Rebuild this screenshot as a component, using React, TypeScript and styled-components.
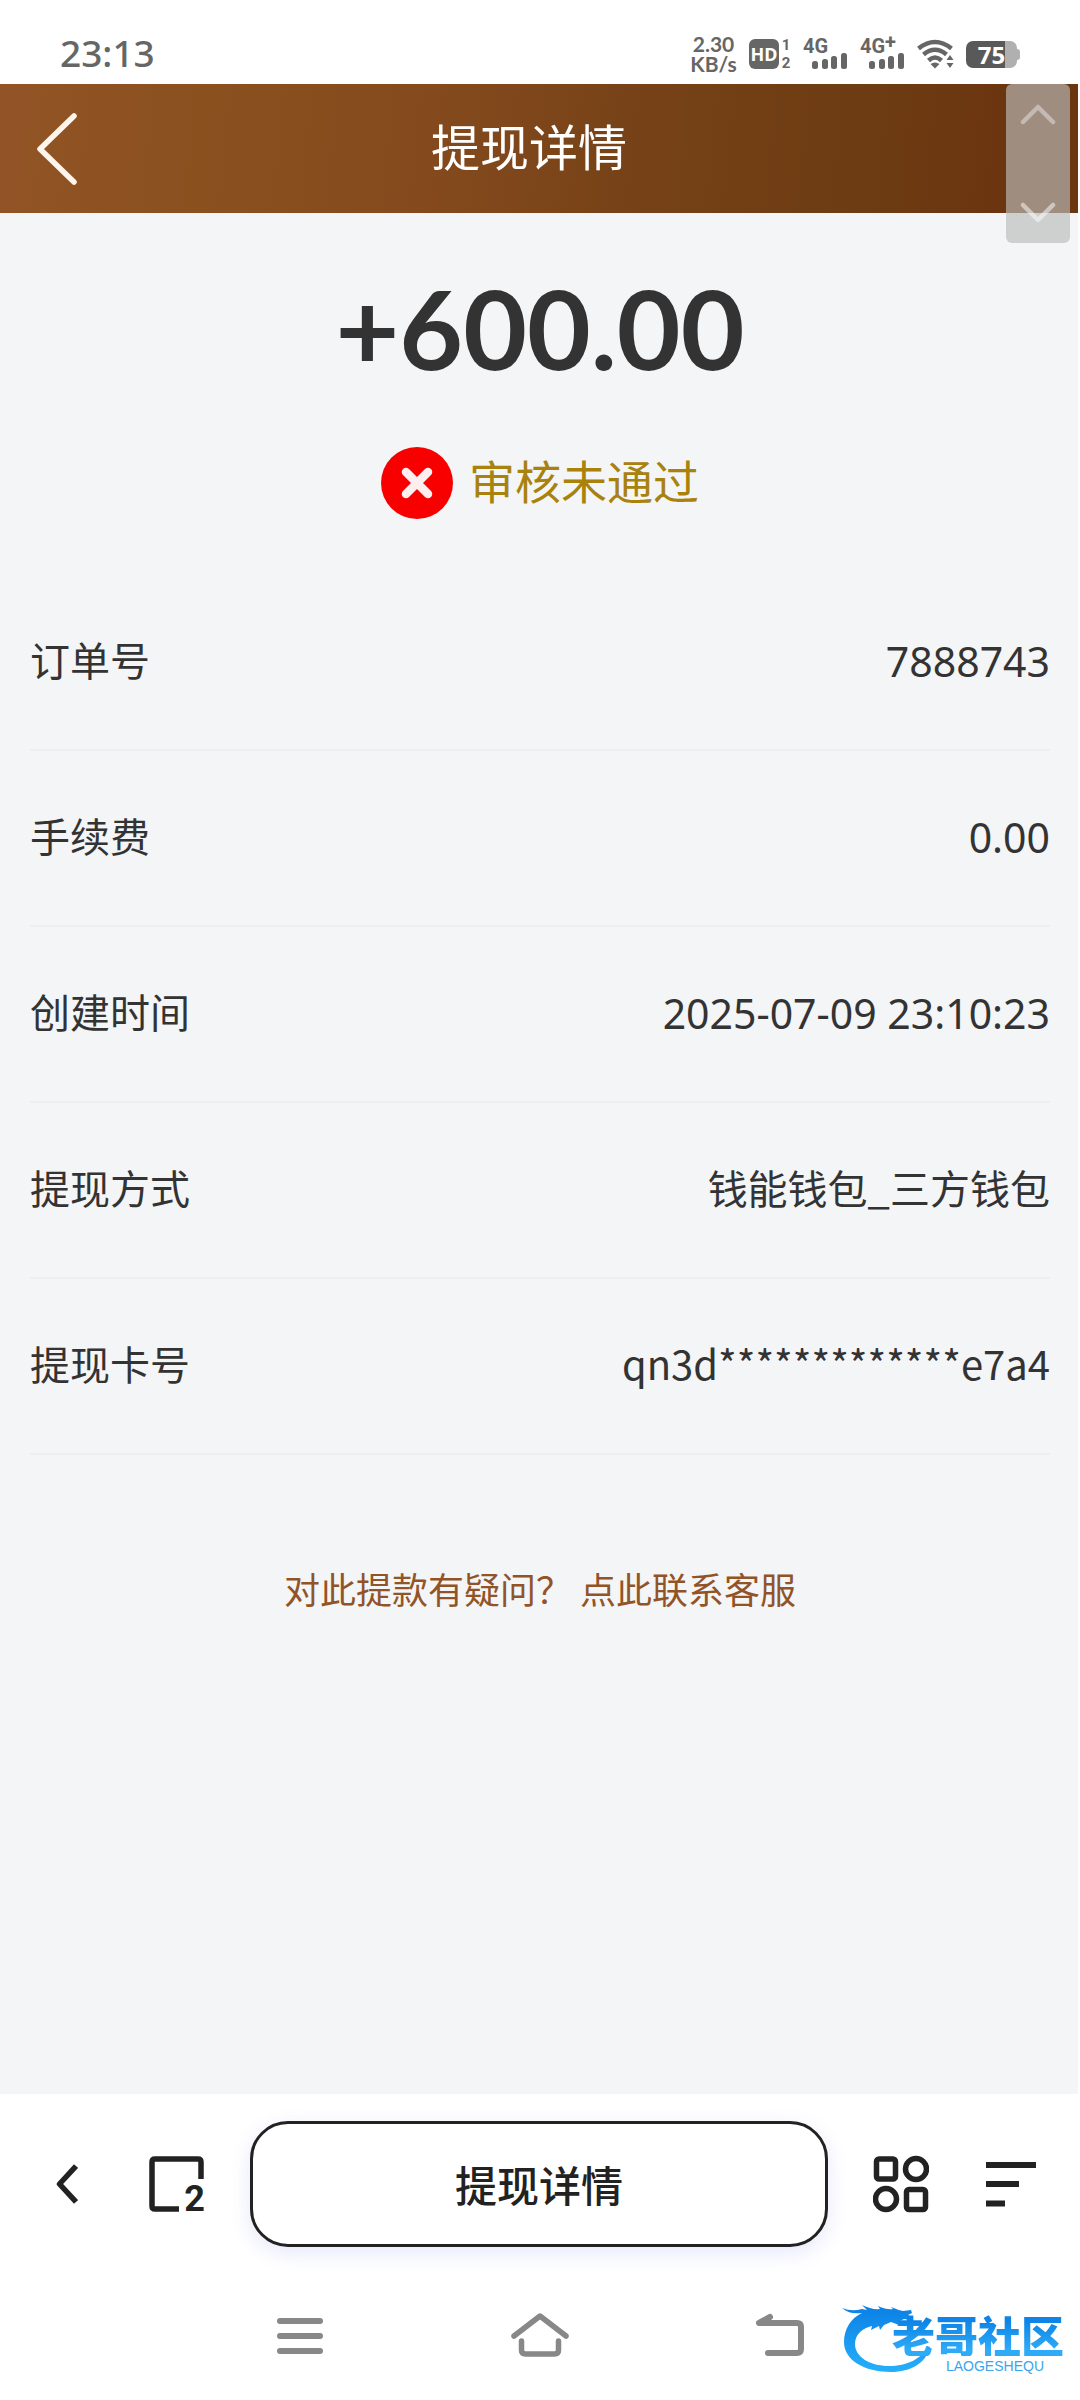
import React from 'react';
import styled, { createGlobalStyle } from 'styled-components';

const cjk = '"Noto Sans CJK SC", sans-serif';
const latin = '"Noto Sans", "Noto Sans CJK SC", sans-serif';

const GlobalStyle = createGlobalStyle`
  *, *::before, *::after { box-sizing: border-box; }
  body { margin: 0; background: #fff; font-family: ${cjk}; color: #333; }
  h1, p, dl, dd { margin: 0; }
  button { padding: 0; border: 0; background: none; color: inherit; font: inherit; cursor: pointer; }
  svg { display: block; }
`;

const Screen = styled.div`
  position: relative;
  display: flex;
  flex-direction: column;
  min-height: 100vh;
`;

const StatusBar = styled.div`
  display: flex;
  align-items: center;
  justify-content: space-between;
  height: 84px;
  padding: 24px 60px 0;
  color: #666;
  font-family: ${latin};
`;

const Clock = styled.time`
  padding-bottom: 2px;
  font-size: 37px;
  line-height: 40px;
  font-weight: 500;
`;

const StatusIcons = styled.div`
  display: flex;
  align-items: center;
  gap: 12px;
`;

const Speed = styled.div`
  display: flex;
  flex-direction: column;
  width: 47px;
  font-family: Lato, sans-serif;
  font-size: 21px;
  line-height: 20px;
  font-weight: 700;
  text-align: center;
`;

const Volte = styled.div`
  display: flex;
  align-items: center;
  gap: 2px;
`;

const HdBadge = styled.span`
  width: 30px;
  height: 30px;
  border-radius: 6px;
  background: #666;
  color: #fff;
  font-size: 18px;
  line-height: 30px;
  font-weight: 700;
  text-align: center;
`;

const SimNumbers = styled.span`
  display: flex;
  flex-direction: column;
  align-items: center;
  width: 10px;
  font-family: Roboto, sans-serif;
  font-size: 15px;
  line-height: 18px;
  font-weight: 700;
`;

const Signal = styled.div`
  width: 45px;
  height: 30px;
  font-family: Roboto, sans-serif;
  font-size: 20px;
  line-height: 14px;
  font-weight: 700;
  white-space: nowrap;

  svg { margin-left: 9px; }
`;

const Plus = styled.span`
  line-height: 0;
  vertical-align: 4px;
`;

const Battery = styled.div`
  display: flex;
  align-items: center;

  &::after {
    content: '';
    width: 3px;
    height: 11px;
    border-radius: 0 3px 3px 0;
    background: #b0b0b0;
  }
`;

const BatteryLevel = styled.span`
  width: 51px;
  height: 27px;
  border-radius: 7px;
  background: linear-gradient(90deg, #595959 76%, #b0b0b0 76%);
  color: #fff;
  font-size: 24px;
  line-height: 27px;
  font-weight: 700;
  text-align: center;
`;

const WebView = styled.div`
  flex: 1;
  display: flex;
  flex-direction: column;
  border-right: 2px solid #fff;
  background: #f3f5f7;
`;

const Header = styled.header`
  display: flex;
  align-items: center;
  height: 129px;
  padding-right: 136px;
  background: linear-gradient(96deg, #925426 0%, #8a501e 20%, #844a1d 40%, #764117 60%, #6d3c12 80%, #6b3510 92%);
  color: #fff;
`;

const BackButton = styled.button`
  display: flex;
  align-items: center;
  width: 116px;
  height: 100%;
  padding-left: 35px;
`;

const Title = styled.h1`
  flex: 1;
  padding-bottom: 8px;
  font-size: 49px;
  line-height: 64px;
  font-weight: 400;
  text-align: center;
`;

const Detail = styled.main`
  flex: 1;
  padding: 48px 28px 0 30px;
`;

const Amount = styled.p`
  font-family: Lato, sans-serif;
  font-size: 110px;
  line-height: 132px;
  font-weight: 700;
  text-align: center;
`;

const ReviewState = styled.p`
  display: flex;
  align-items: center;
  justify-content: center;
  gap: 16px;
  margin: 54px 0 56px;
  color: #a8820c;
  font-size: 46px;
  line-height: 64px;
`;

const ReviewText = styled.span`
  padding-bottom: 8px;
`;

const Rows = styled.dl`
  color: #333;
`;

const Row = styled.div`
  display: flex;
  align-items: center;
  justify-content: space-between;
  height: 176px;
  border-bottom: 2px solid #eeeff0;
  font-size: 40px;
  line-height: 56px;
`;

const Label = styled.dt`
  padding-bottom: 6px;
`;

const Value = styled.dd<{ $numeric?: boolean }>`
  padding-bottom: ${(p) => (p.$numeric ? 2 : 6)}px;
  font-family: ${(p) => (p.$numeric ? latin : cjk)};
  font-size: ${(p) => (p.$numeric ? 41 : 40)}px;
`;

const Help = styled.p`
  padding: 106px 0 60px;
  font-size: 36px;
  line-height: 54px;
  text-align: center;
`;

const HelpLink = styled.a`
  color: #925426;
  text-decoration: none;
`;

const ScrollPad = styled.div`
  position: absolute;
  top: 84px;
  right: 10px;
  display: flex;
  flex-direction: column;
  justify-content: space-between;
  width: 64px;
  height: 159px;
  border-radius: 6px;
  background: rgba(187, 187, 187, 0.66);
`;

const ScrollButton = styled.button`
  display: grid;
  place-items: center;
  height: 60px;
`;

const Toolbar = styled.nav`
  display: flex;
  align-items: center;
  height: 180px;
  padding: 0 32px 0 27px;
  color: #222;
`;

const ToolButton = styled.button<{ $width: number }>`
  display: grid;
  place-items: center;
  flex: 0 0 ${(p) => p.$width}px;
  height: 126px;
`;

const TabsIcon = styled.span`
  position: relative;
  width: 56px;
  height: 58px;
`;

const TabCount = styled.span`
  position: absolute;
  right: 0;
  bottom: 0;
  font-family: Roboto, sans-serif;
  font-size: 36px;
  line-height: 44px;
  font-weight: 700;
  margin-bottom: -8px;
`;

const AddressButton = styled.button`
  flex: 1;
  height: 126px;
  margin-left: 3px;
  border: 3px solid #222;
  border-radius: 38px;
  background: #fff;
  box-shadow: 0 6px 20px rgba(80, 90, 220, 0.14);
  font-size: 42px;
  line-height: 60px;
  font-weight: 500;
`;

const SystemNav = styled.nav`
  display: flex;
  justify-content: center;
  height: 126px;
  padding-bottom: 2px;
  color: #888;
`;

const NavButton = styled.button`
  display: grid;
  place-items: center;
  flex: 0 1 240px;
`;

const Watermark = styled.div`
  position: absolute;
  right: 16px;
  bottom: 22px;
  width: 222px;
  height: 78px;

  svg { position: absolute; inset: 0; }
`;

const BrandText = styled.div`
  position: relative;
  display: flex;
  flex-direction: column;
  align-items: flex-end;
  padding-top: 12px;
`;

const BrandName = styled.span`
  background: linear-gradient(#0d84e6 20%, #2eaaf7 85%);
  background-clip: text;
  color: transparent;
  font-size: 43px;
  line-height: 44px;
  font-weight: 900;
`;

const BrandLatin = styled.span`
  padding-right: 20px;
  color: #3aa5ee;
  font-family: "Liberation Sans", sans-serif;
  font-size: 14px;
  line-height: 20px;
`;

const SignalBars = () => (
  <svg width="36" height="16" viewBox="0 0 36 16" fill="currentColor" aria-hidden="true">
    <rect x="0" y="8" width="6" height="8" rx="2.5" />
    <rect x="10" y="6" width="6" height="10" rx="2.5" />
    <rect x="19" y="3" width="6" height="13" rx="2.5" />
    <rect x="29" y="0" width="6" height="16" rx="2.5" />
  </svg>
);

const WifiIcon = () => (
  <svg width="37" height="30" viewBox="0 0 37 30" fill="none" stroke="currentColor" strokeWidth="4.5" aria-hidden="true">
    <path d="M1.5 9.5Q18 -3.5 34.5 9.5" />
    <path d="M6.5 15.5Q18 6 29.5 15.5" />
    <path d="M11.5 21.5Q18 15.5 24.5 21.5" />
    <path d="M13.5 25Q18 22 22.5 25L18 29.5Z" fill="currentColor" stroke="none" />
    <path d="M33 16l3.5 5h-7zM33 29l-3.5-5h7z" fill="currentColor" stroke="none" />
  </svg>
);

const FailIcon = () => (
  <svg width="72" height="72" viewBox="0 0 72 72" aria-hidden="true">
    <circle cx="36" cy="36" r="36" fill="#f80000" />
    <path d="M25 25L47 47M47 25L25 47" stroke="#fdeef0" strokeWidth="8.5" strokeLinecap="round" />
  </svg>
);

const DragonMark = () => (
  <svg width="222" height="78" viewBox="0 0 222 78" aria-hidden="true">
    <defs>
      <linearGradient id="dragon" x1="0" y1="0" x2="0" y2="1">
        <stop offset="0" stopColor="#0b7fe4" />
        <stop offset="1" stopColor="#25b0fb" />
      </linearGradient>
    </defs>
    <path
      fill="url(#dragon)"
      d="M0 8q10 4 20 1l5 1-5-5q10 5 18 4l-2-3q9 4 15 3l-2-2q7 3 12 4l8-1 1 3-4 2 5 3-2 2-7-1-4 2 6 1 5-1-3 5-9-1-8-3-7 3-4 5-1-4-8 4 1-4C21 28 13 34 13 44c0 13 15 22 34 22 18 0 33-7 38-20l3 1C84 63 69 72 49 72 22 72 2 60 2 42 2 29 9 18 20 13 12 14 6 13 0 8z"
    />
  </svg>
);

const rows = [
  { label: '订单号', value: '7888743', numeric: true },
  { label: '手续费', value: '0.00', numeric: true },
  { label: '创建时间', value: '2025-07-09 23:10:23', numeric: true },
  { label: '提现方式', value: '钱能钱包_三方钱包' },
  { label: '提现卡号', value: 'qn3d*************e7a4' },
];

export default function App() {
  return (
    <>
      <GlobalStyle />
      <Screen lang="zh-CN">
        <StatusBar>
          <Clock>23:13</Clock>
          <StatusIcons>
            <Speed>
              <span>2.30</span>
              <span>KB/s</span>
            </Speed>
            <Volte>
              <HdBadge>HD</HdBadge>
              <SimNumbers>
                <span>1</span>
                <span>2</span>
              </SimNumbers>
            </Volte>
            <Signal>
              4G
              <SignalBars />
            </Signal>
            <Signal>
              4G<Plus>+</Plus>
              <SignalBars />
            </Signal>
            <WifiIcon />
            <Battery>
              <BatteryLevel>75</BatteryLevel>
            </Battery>
          </StatusIcons>
        </StatusBar>

        <WebView>
          <Header>
            <BackButton aria-label="返回">
              <svg width="44" height="76" viewBox="0 0 44 76" fill="none" stroke="#fff5ea" strokeWidth="5.5" strokeLinecap="round" strokeLinejoin="round">
                <path d="M39 5L5 38L39 71" />
              </svg>
            </BackButton>
            <Title>提现详情</Title>
          </Header>
          <Detail>
            <Amount>+600.00</Amount>
            <ReviewState>
              <FailIcon />
              <ReviewText>审核未通过</ReviewText>
            </ReviewState>
            <Rows>
              {rows.map((row) => (
                <Row key={row.label}>
                  <Label>{row.label}</Label>
                  <Value $numeric={row.numeric}>{row.value}</Value>
                </Row>
              ))}
            </Rows>
            <Help>
              <HelpLink href="#service">对此提款有疑问？ 点此联系客服</HelpLink>
            </Help>
          </Detail>
        </WebView>

        <ScrollPad>
          <ScrollButton aria-label="向上滚动">
            <svg width="36" height="22" viewBox="0 0 36 22" fill="none" stroke="#fff" strokeOpacity="0.4" strokeWidth="4.5" strokeLinecap="round" strokeLinejoin="round">
              <path d="M3 19L18 4L33 19" />
            </svg>
          </ScrollButton>
          <ScrollButton aria-label="向下滚动">
            <svg width="36" height="22" viewBox="0 0 36 22" fill="none" stroke="#fff" strokeOpacity="0.5" strokeWidth="4.5" strokeLinecap="round" strokeLinejoin="round">
              <path d="M3 3L18 18L33 3" />
            </svg>
          </ScrollButton>
        </ScrollPad>

        <Toolbar aria-label="浏览器">
          <ToolButton $width={80} aria-label="后退">
            <svg width="22" height="40" viewBox="0 0 22 40" fill="none" stroke="currentColor" strokeWidth="5.5" strokeLinejoin="round">
              <path d="M20 2L3.5 20L20 38" />
            </svg>
          </ToolButton>
          <ToolButton $width={140} aria-label="标签页">
            <TabsIcon>
              <svg width="56" height="58" viewBox="0 0 56 58" fill="none" stroke="currentColor" strokeWidth="5.5">
                <path d="M30 54H6Q3 54 3 51V7Q3 4 6 4H49Q52 4 52 7V24" />
              </svg>
              <TabCount>2</TabCount>
            </TabsIcon>
          </ToolButton>
          <AddressButton>提现详情</AddressButton>
          <ToolButton $width={146} aria-label="应用">
            <svg width="56" height="58" viewBox="0 0 56 58" fill="none" stroke="currentColor" strokeWidth="5.5">
              <rect x="3.5" y="4" width="19" height="20" rx="2.5" />
              <circle cx="43" cy="14" r="10.5" />
              <circle cx="13" cy="44" r="10.5" />
              <rect x="33.5" y="34.5" width="19" height="20" rx="2.5" />
            </svg>
          </ToolButton>
          <ToolButton $width={74} aria-label="菜单">
            <svg width="50" height="46" viewBox="0 0 50 46" fill="currentColor">
              <path d="M0 1h50v6H0zM0 20h33v6H0zM0 39.5h19v6H0z" />
            </svg>
          </ToolButton>
        </Toolbar>

        <SystemNav aria-label="系统导航">
          <NavButton aria-label="最近任务">
            <svg width="46" height="38" viewBox="0 0 46 38" stroke="currentColor" strokeWidth="6" strokeLinecap="round">
              <path d="M3 4H43M3 19H43M3 34H43" />
            </svg>
          </NavButton>
          <NavButton aria-label="主屏幕">
            <svg width="58" height="48" viewBox="0 0 58 48" fill="none" stroke="currentColor" strokeWidth="5.5" strokeLinecap="round" strokeLinejoin="round">
              <path d="M3 24L29 4L55 24" />
              <path d="M10.5 29V38Q10.5 42 14.5 42H43.5Q47.5 42 47.5 38V29" />
            </svg>
          </NavButton>
          <NavButton aria-label="返回上一级">
            <svg width="50" height="46" viewBox="0 0 50 46" fill="none" stroke="currentColor" strokeWidth="6" strokeLinecap="round" strokeLinejoin="round">
              <path d="M15 4L4 10H42Q46 10 46 14V36Q46 40 42 40H13" />
            </svg>
          </NavButton>
        </SystemNav>

        <Watermark>
          <DragonMark />
          <BrandText>
            <BrandName>老哥社区</BrandName>
            <BrandLatin>LAOGESHEQU</BrandLatin>
          </BrandText>
        </Watermark>
      </Screen>
    </>
  );
}
